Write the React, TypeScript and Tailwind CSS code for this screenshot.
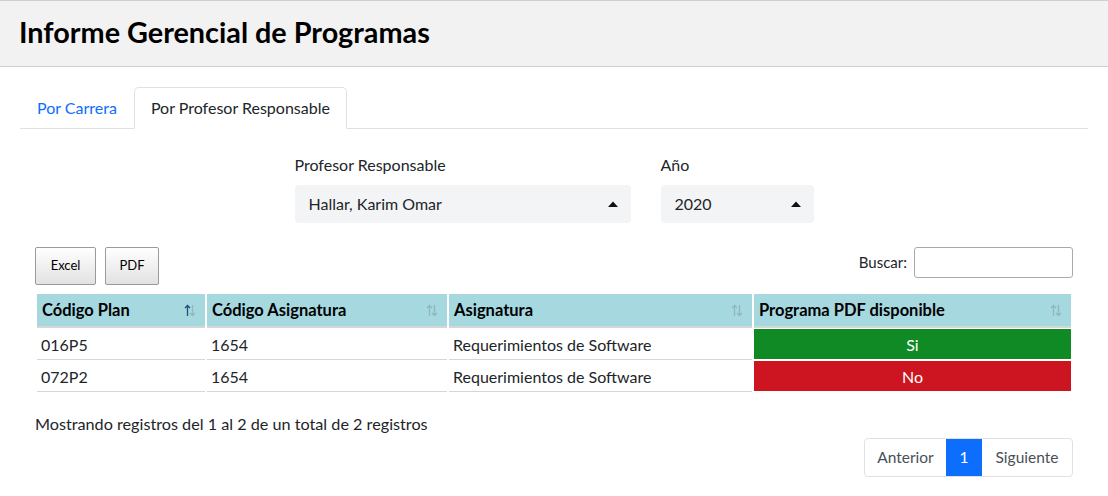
import React from "react";

const font = { fontFamily: "Lato, 'Noto Sans', sans-serif" };

function SortIcon({ active }: { active?: boolean }) {
  return (
    <svg width="12" height="13" viewBox="0 0 12 13" className="shrink-0">
      <g strokeWidth="1.3" fill="none">
        <path d="M3.5 12 V1.5 M1 4 L3.5 1.5 L6 4" stroke={active ? "#1f4e79" : "#8fb7bd"} />
        <path d="M8.5 1 V11.5 M6 9 L8.5 11.5 L11 9" stroke="#8fb7bd" />
      </g>
    </svg>
  );
}

function Caret() {
  return (
    <svg width="10" height="6" viewBox="0 0 10 6">
      <path d="M0 6 L5 0.5 L10 6 Z" fill="#111" />
    </svg>
  );
}

export default function App() {
  const rows = [
    { plan: "016P5", cod: "1654", asig: "Requerimientos de Software", ok: true },
    { plan: "072P2", cod: "1654", asig: "Requerimientos de Software", ok: false },
  ];
  return (
    <div className="w-[1108px] h-[496px] bg-white text-[#212529] overflow-hidden" style={font}>
      <header className="h-[67px] bg-[#f2f2f2] border-t border-b border-[#cfcfcf] flex items-center px-[19px]">
        <h1 className="text-[28.8px] font-bold text-black leading-none -mt-[2px]">Informe Gerencial de Programas</h1>
      </header>

      <div className="mx-[20px] mt-[20px]">
        <div className="flex border-b border-[#dee2e6] h-[42px] text-[16px]">
          <div className="px-[17px] flex items-center text-[#0d6efd] mb-[-1px]">Por Carrera</div>
          <div className="px-[16px] flex items-center bg-white border border-[#dee2e6] border-b-white rounded-t-[5px] mb-[-1px]">
            Por Profesor Responsable
          </div>
        </div>
      </div>

      <div className="flex justify-center gap-[30px] mt-[20px] text-[16px]">
        <div className="w-[336px]">
          <div className="h-[36px] leading-[36px] -mt-[2px]">Profesor Responsable</div>
          <div className="h-[38px] bg-[#f3f4f6] rounded-[4px] flex items-center justify-between pl-[14px] pr-[13px] mt-[2px]">
            <span>Hallar, Karim Omar</span>
            <Caret />
          </div>
        </div>
        <div className="w-[153px]">
          <div className="h-[36px] leading-[36px] -mt-[2px]">Año</div>
          <div className="h-[38px] bg-[#f3f4f6] rounded-[4px] flex items-center justify-between pl-[14px] pr-[13px] mt-[2px]">
            <span>2020</span>
            <Caret />
          </div>
        </div>
      </div>

      <div className="mx-[35px] mt-[24px] flex justify-between items-start">
        <div className="flex gap-[9px]">
          <button className="h-[38px] w-[61px] text-[13px] border border-[#9a9a9a] rounded-[2px] bg-gradient-to-b from-white to-[#e2e2e2] text-black">Excel</button>
          <button className="h-[38px] w-[54px] text-[13px] border border-[#9a9a9a] rounded-[2px] bg-gradient-to-b from-white to-[#e2e2e2] text-black">PDF</button>
        </div>
        <div className="flex items-center gap-[7px] text-[15px]">
          <span>Buscar:</span>
          <div className="w-[159px] h-[31px] border border-[#aaaaaa] rounded-[3px] bg-white" />
        </div>
      </div>

      <div className="mx-[35px] mt-[9px]">
        <table className="w-full border-separate border-spacing-x-[2px] border-spacing-y-0 text-[16px]">
          <thead>
            <tr className="h-[34px]">
              {[
                ["Código Plan", "w-[168px]", true],
                ["Código Asignatura", "w-[240px]", false],
                ["Asignatura", "w-[303px]", false],
                ["Programa PDF disponible", "", false],
              ].map(([t, w, a], i) => (
                <th key={i} className={`${w as string} bg-[#a6d8e0] border-b-2 border-[#d6d6d6] px-[5px] text-left font-bold text-black text-[16.5px]`}>
                  <div className="flex items-center justify-between pr-[4px] pt-[1px]">
                    <span>{t as string}</span>
                    <SortIcon active={a as boolean} />
                  </div>
                </th>
              ))}
            </tr>
          </thead>
          <tbody>
            {rows.map((r, i) => (
              <tr key={i} className="h-[32px]">
                <td className="border-b border-[#d6d6d6] px-[4px] pt-[2px]">{r.plan}</td>
                <td className="border-b border-[#d6d6d6] px-[4px] pt-[2px]">{r.cod}</td>
                <td className="border-b border-[#d6d6d6] px-[4px] pt-[2px]">{r.asig}</td>
                <td className="border-b border-white p-0 pt-[1px]">
                  <div className={`h-[30px] flex items-center justify-center text-white pt-[1px] ${r.ok ? "bg-[#0f8a24]" : "bg-[#cc1520]"}`}>
                    {r.ok ? "Si" : "No"}
                  </div>
                </td>
              </tr>
            ))}
          </tbody>
        </table>
      </div>

      <div className="mx-[35px] mt-[21px] text-[16.2px] leading-[22px]">Mostrando registros del 1 al 2 de un total de 2 registros</div>

      <div className="mx-[35px] mt-[3px] flex justify-end">
        <div className="flex h-[39px] border border-[#dee2e6] rounded-[4px] overflow-hidden text-[15.5px] text-[#495057]">
          <div className="w-[81px] flex items-center justify-center">Anterior</div>
          <div className="w-[36px] flex items-center justify-center bg-[#0d6efd] text-white">1</div>
          <div className="w-[90px] flex items-center justify-center">Siguiente</div>
        </div>
      </div>
    </div>
  );
}
